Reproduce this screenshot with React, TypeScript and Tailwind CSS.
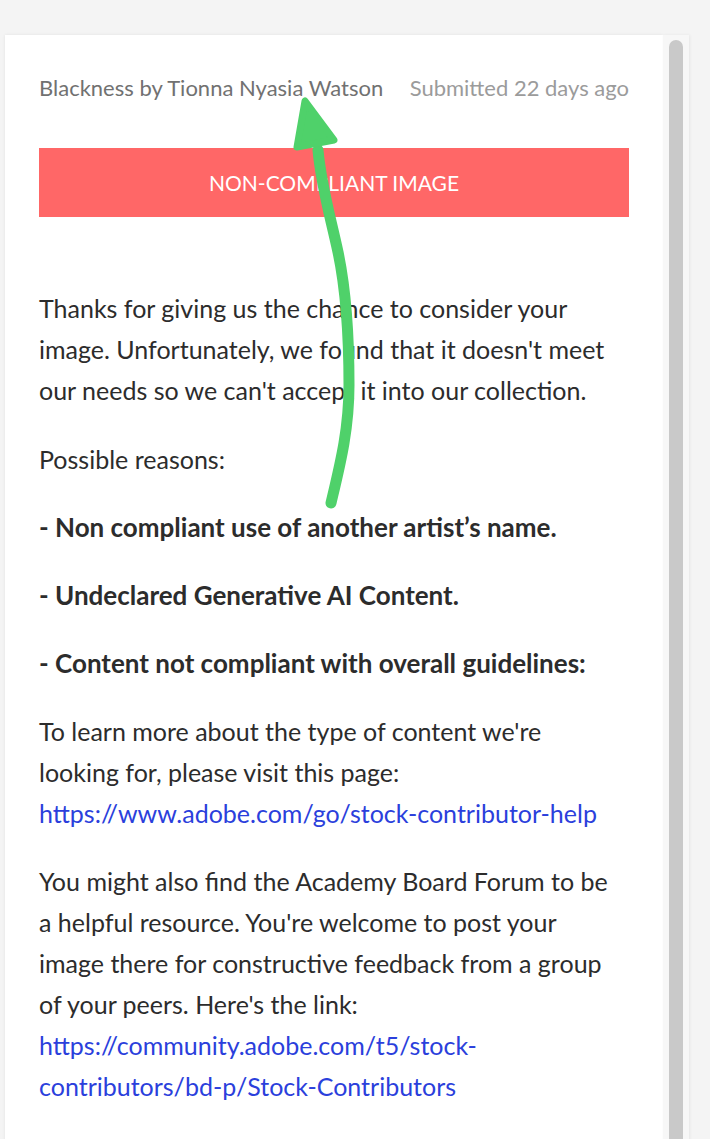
import React from 'react';

const font = { fontFamily: 'Lato, "Open Sans", sans-serif' };

const Arrow: React.FC = () => (
  <svg
    className="pointer-events-none absolute left-0 top-0"
    width="710"
    height="1139"
    viewBox="0 0 710 1139"
  >
    <path
      d="M331 503 C 340 465, 349 430, 349 385 C 349 330, 346 290, 338 252 C 330 215, 321 185, 318 150"
      fill="none"
      stroke="#4fd16a"
      strokeWidth="11"
      strokeLinecap="round"
    />
    <path
      d="M305 101 L 297 147 L 334 140 Z"
      fill="#4fd16a"
      stroke="#4fd16a"
      strokeWidth="7"
      strokeLinejoin="round"
    />
  </svg>
);

const App: React.FC = () => {
  return (
    <div className="relative min-h-[1139px] w-[710px] overflow-hidden bg-[#f4f4f4]" style={font}>
      <div className="flex pl-[5px] pt-[35px]">
        <div className="w-[658px] bg-white px-[34px] pb-[60px] shadow-[0_0_3px_rgba(0,0,0,0.08)]">
          <div className="flex h-[104px] items-center justify-between text-[22px]">
            <span className="text-[#717171]">Blackness by Tionna Nyasia Watson</span>
            <span className="text-[#9b9b9b]">Submitted 22 days ago</span>
          </div>

          <div className="mt-[9px] flex h-[69px] items-center justify-center bg-[#ff6767] text-[21px] text-white">
            NON-COMPLIANT IMAGE
          </div>

          <div className="mt-[71px] text-[25px] leading-[41px] text-[#2c2c2c]">
            <p>
              Thanks for giving us the chance to consider your
              <br />
              image. Unfortunately, we found that it doesn't meet
              <br />
              our needs so we can't accept it into our collection.
            </p>
            <p className="mt-[28px]">Possible reasons:</p>
            <p className="mt-[27px] text-[26px] font-bold">- Non compliant use of another artist’s name.</p>
            <p className="mt-[27px] text-[26px] font-bold">- Undeclared Generative AI Content.</p>
            <p className="mt-[27px] text-[26px] font-bold">- Content not compliant with overall guidelines:</p>
            <p className="mt-[27px]">
              To learn more about the type of content we're
              <br />
              looking for, please visit this page:
              <br />
              <a className="text-[#2b3fdc]">https://www.adobe.com/go/stock-contributor-help</a>
            </p>
            <p className="mt-[27px]">
              You might also find the Academy Board Forum to be
              <br />
              a helpful resource. You're welcome to post your
              <br />
              image there for constructive feedback from a group
              <br />
              of your peers. Here's the link:
              <br />
              <a className="text-[#2b3fdc]">
                https://community.adobe.com/t5/stock-
                <br />
                contributors/bd-p/Stock-Contributors
              </a>
            </p>
          </div>
        </div>

        <div className="flex w-[26px] justify-start bg-[#f7f7f7] pl-[6px] pt-[5px] shadow-[1px_0_3px_rgba(0,0,0,0.06)]">
          <div className="h-[1120px] w-[14px] rounded-t-full bg-[#c9c9c9]" />
        </div>
      </div>
      <Arrow />
    </div>
  );
};

export default App;
